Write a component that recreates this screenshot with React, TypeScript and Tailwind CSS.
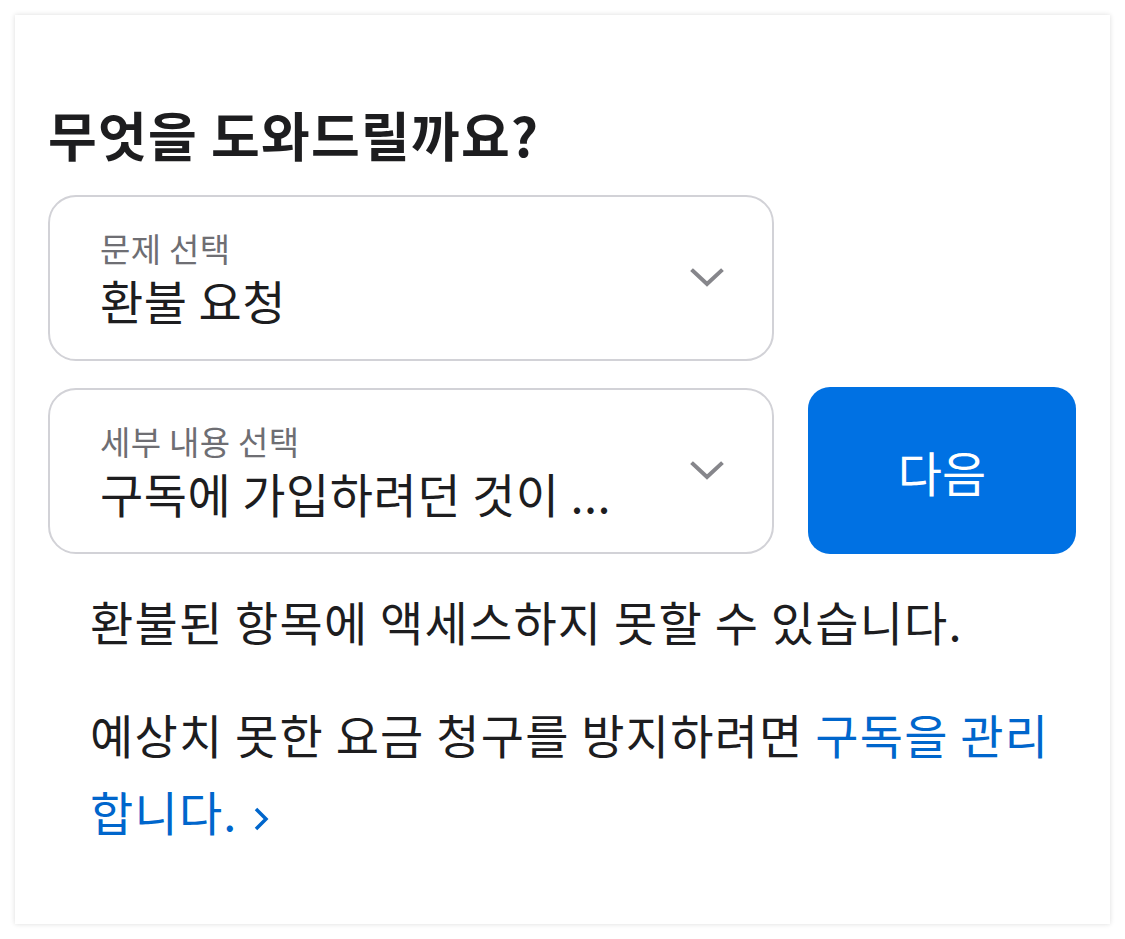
const font = { fontFamily: '"Noto Sans CJK KR", "Noto Sans", sans-serif' };

function SelectBox({ label, value }: { label: string; value: string }) {
  return (
    <div className="flex h-[166px] w-[726px] items-center rounded-[28px] border-2 border-[#d2d2d7] bg-white pl-[50px] pr-[48px]">
      <div className="flex min-w-0 flex-1 flex-col">
        <span className="text-[33px] leading-[44px] tracking-[0.3px] text-[#6e6e73]">{label}</span>
        <span className="whitespace-nowrap text-[47px] leading-[60px] tracking-[0.5px] text-[#1d1d1f]">
          {value}
        </span>
      </div>
      <svg width="34" height="22" viewBox="0 0 34 22" className="ml-6 shrink-0">
        <path d="M3 4 L17 17 L31 4" fill="none" stroke="#86868b" strokeWidth="4" strokeLinecap="square" />
      </svg>
    </div>
  );
}

export default function App() {
  return (
    <div className="min-h-screen bg-white p-[15px]" style={font}>
      <div className="h-[909px] w-[1095px] bg-white px-[33px] pt-[86px] shadow-[0_0_5px_rgba(0,0,0,0.14)]">
        <h1 className="text-[53px] font-bold leading-[66px] tracking-[1.2px] text-[#1d1d1f]">
          무엇을 도와드릴까요?
        </h1>

        <div className="mt-[28px] flex flex-col gap-[26px]">
          <SelectBox label="문제 선택" value="환불 요청" />
          <div className="flex items-center gap-[34px]">
            <SelectBox label="세부 내용 선택" value="구독에 가입하려던 것이 ..." />
            <button className="h-[167px] w-[268px] rounded-[22px] bg-[#0071e3] text-[48px] text-white">
              다음
            </button>
          </div>
        </div>

        <div className="mt-[28px] pl-[42px] pr-[20px] text-[47px] leading-[77px] tracking-[1.2px] text-[#1d1d1f]">
          <p>환불된 항목에 액세스하지 못할 수 있습니다.</p>
          <p className="mt-[36px]">
            예상치 못한 요금 청구를 방지하려면{" "}
            <a className="text-[#0066cc]">
              구독을 관리합니다.
              <svg width="18" height="28" viewBox="0 0 18 28" className="ml-[14px] inline-block align-[-2px]">
                <path d="M4 4 L14 14 L4 24" fill="none" stroke="#0066cc" strokeWidth="3.5" />
              </svg>
            </a>
          </p>
        </div>
      </div>
    </div>
  );
}
